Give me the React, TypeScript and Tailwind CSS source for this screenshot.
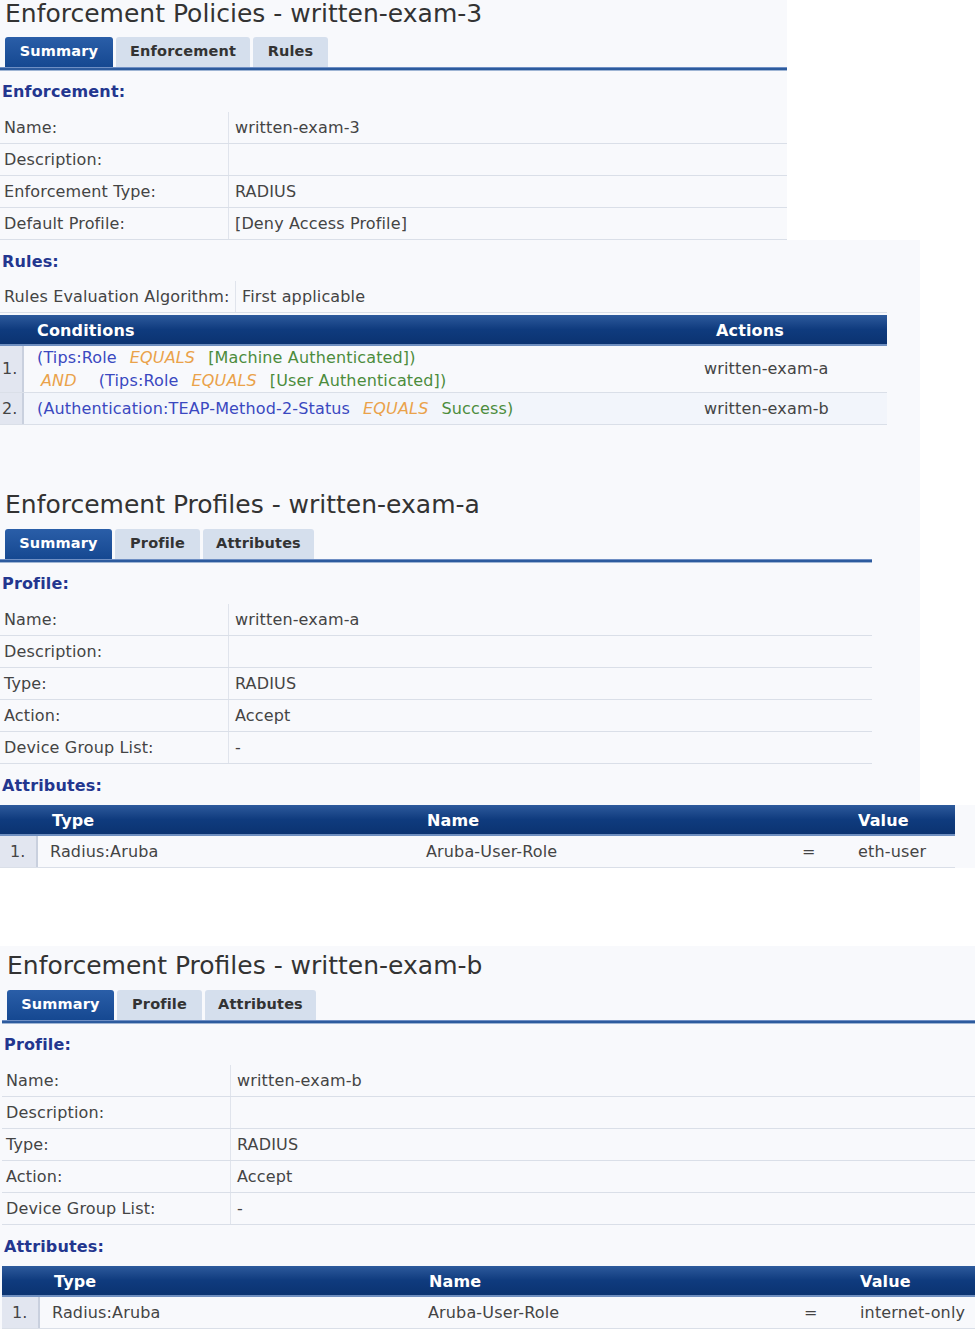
import React from "react";

const font = { fontFamily: '"DejaVu Sans", Verdana, sans-serif', letterSpacing: "0.15px" };

function Title({ text, pl = "pl-[5px]", cls }: { text: string; pl?: string; cls: string }) {
  return (
    <div className={`${cls} ${pl} flex items-center text-[25px] leading-[25px] text-[#333] whitespace-nowrap tracking-normal`}>
      {text}
    </div>
  );
}

function Tabs({ tabs, widths, lineW }: { tabs: string[]; widths: string[]; lineW: string }) {
  return (
    <div className={`${lineW}`}>
      <div className="flex items-end gap-[3px] pl-[5px] h-[30px]">
        {tabs.map((t, i) => (
          <div
            key={t}
            className={`${widths[i]} h-[30px] rounded-t-[3px] flex items-center justify-center text-[14.5px] font-bold ${
              i === 0 ? "bg-linear-to-b from-[#2a5ea8] to-[#154891] text-white" : "bg-[#d5dfed] text-[#333]"
            }`}
          >
            {t}
          </div>
        ))}
      </div>
      <div className="h-[4px] bg-[#2d5b9e] border-t border-[#6f8fc4] border-b border-b-[#9fb5d4]" />
    </div>
  );
}

function Heading({ text, low = false }: { text: string; low?: boolean }) {
  return (
    <div className={`h-[41px] flex items-center pl-[2px] text-[16px] font-bold text-[#23368f] ${low ? "pt-[3px]" : ""}`}>
      {text}
    </div>
  );
}

function Row({ label, value, lw = "w-[229px]" }: { label: string; value: string; lw?: string }) {
  return (
    <div className="flex h-[32px] border-b border-[#dadfe8] text-[16px] text-[#444]">
      <div className={`${lw} shrink-0 pl-[4px] flex items-center border-r border-[#e0e4ec] whitespace-nowrap`}>{label}</div>
      <div className="pl-[6px] flex items-center whitespace-nowrap">{value}</div>
    </div>
  );
}

function TableHeader({ cols }: { cols: { text: string; cls: string }[] }) {
  return (
    <div className="relative h-[31px] bg-linear-to-b from-[#2d5a9c] via-[#0f3b7e] to-[#0b3371] text-white text-[16px] font-bold border-b-[2px] border-[#6f8fc0]">
      {cols.map((c) => (
        <span key={c.text} className={`absolute top-[4px] ${c.cls}`}>
          {c.text}
        </span>
      ))}
    </div>
  );
}

const B = "text-[#3a48c0]";
const O = "text-[#eaa24a] italic";
const G = "text-[#4c8c3c]";

function ProfileSection({
  title,
  name,
  lineW,
  shift,
}: {
  title: string;
  name: string;
  lineW: string;
  shift: boolean;
}) {
  return (
    <>
      <Title text={title} pl={shift ? "pl-[7px]" : "pl-[5px]"} cls="h-[44px] pb-[6px]" />
      <div className={shift ? "pl-[2px]" : ""}>
        <Tabs tabs={["Summary", "Profile", "Attributes"]} widths={["w-[107px]", "w-[85px]", "w-[111px]"]} lineW={lineW} />
      </div>
      <div className={`${lineW} ${shift ? "pl-[2px]" : ""}`}>
        <Heading text="Profile:" />
        <Row label="Name:" value={name} />
        <Row label="Description:" value="" />
        <Row label="Type:" value="RADIUS" />
        <Row label="Action:" value="Accept" />
        <Row label="Device Group List:" value="-" />
      </div>
    </>
  );
}

function AttrTable({ value }: { value: string }) {
  return (
    <div className="text-[16px]">
      <TableHeader
        cols={[
          { text: "Type", cls: "left-[52px]" },
          { text: "Name", cls: "left-[427px]" },
          { text: "Value", cls: "left-[858px]" },
        ]}
      />
      <div className="flex h-[32px] border-b border-[#dadfe8] text-[#444]">
        <div className="w-[38px] shrink-0 bg-[#e2e6f0] border-r-[2px] border-[#c9d0de] flex items-center pl-[10px]">1.</div>
        <div className="w-[388px] shrink-0 pl-[12px] flex items-center">Radius:Aruba</div>
        <div className="w-[376px] shrink-0 flex items-center">Aruba-User-Role</div>
        <div className="w-[56px] shrink-0 flex items-center">=</div>
        <div className="flex items-center">{value}</div>
      </div>
    </div>
  );
}

export default function App() {
  return (
    <div className="bg-white min-h-[1331px] w-[975px] overflow-hidden" style={font}>
      {/* Block A */}
      <div className="w-[787px] bg-[#f8f9fc]">
        <Title text="Enforcement Policies - written-exam-3" cls="h-[37px] pb-[11px]" />
        <Tabs tabs={["Summary", "Enforcement", "Rules"]} widths={["w-[108px]", "w-[134px]", "w-[75px]"]} lineW="w-[787px]" />
        <Heading text="Enforcement:" />
        <Row label="Name:" value="written-exam-3" />
        <Row label="Description:" value="" />
        <Row label="Enforcement Type:" value="RADIUS" />
        <Row label="Default Profile:" value="[Deny Access Profile]" />
      </div>
      {/* Block B */}
      <div className="w-[920px] bg-[#f8f9fc]">
        <div className="w-[887px]">
          <Heading text="Rules:" low />
          <Row label="Rules Evaluation Algorithm:" value="First applicable" lw="w-[236px]" />
          <div className="h-[2px]" />
          <div className="text-[16px]">
            <TableHeader
              cols={[
                { text: "Conditions", cls: "left-[37px]" },
                { text: "Actions", cls: "left-[716px]" },
              ]}
            />
            <div className="flex h-[47px] border-b border-[#dadfe8]">
              <div className="w-[24px] shrink-0 bg-[#e2e6f0] border-r-[2px] border-[#c9d0de] flex items-center pl-[2px] text-[#444]">1.</div>
              <div className="w-[680px] shrink-0 pl-[13px] flex flex-col justify-center leading-[23px] whitespace-nowrap">
                <div>
                  <span className={B}>(Tips:Role</span>
                  <span className={`${O} ml-[13px]`}>EQUALS</span>
                  <span className={`${G} ml-[13px]`}>[Machine Authenticated])</span>
                </div>
                <div>
                  <span className={`${O} ml-[4px]`}>AND</span>
                  <span className={`${B} ml-[22px]`}>(Tips:Role</span>
                  <span className={`${O} ml-[13px]`}>EQUALS</span>
                  <span className={`${G} ml-[13px]`}>[User Authenticated])</span>
                </div>
              </div>
              <div className="flex items-center text-[#444]">written-exam-a</div>
            </div>
            <div className="flex h-[32px] border-b border-[#dadfe8] bg-[#f2f5fb]">
              <div className="w-[24px] shrink-0 bg-[#e2e6f0] border-r-[2px] border-[#c9d0de] flex items-center pl-[2px] text-[#444]">2.</div>
              <div className="w-[680px] shrink-0 pl-[13px] flex items-center whitespace-nowrap">
                <span className={B}>(Authentication:TEAP-Method-2-Status</span>
                <span className={`${O} ml-[13px]`}>EQUALS</span>
                <span className={`${G} ml-[13px]`}>Success)</span>
              </div>
              <div className="flex items-center text-[#444]">written-exam-b</div>
            </div>
          </div>
        </div>
        <div className="h-[60px]" />
        <ProfileSection title="Enforcement Profiles - written-exam-a" name="written-exam-a" lineW="w-[872px]" shift={false} />
        <Heading text="Attributes:" low />
      </div>
      {/* Block C */}
      <div className="bg-[#f8f9fc] w-[975px]">
        <div className="w-[955px]">
          <AttrTable value="eth-user" />
        </div>
        <div className="h-[78px] bg-white" />
      </div>
      {/* Block D */}
      <div className="bg-[#f8f9fc] w-[975px]">
        <ProfileSection title="Enforcement Profiles - written-exam-b" name="written-exam-b" lineW="w-[975px]" shift={true} />
        <div className="pl-[2px]">
          <Heading text="Attributes:" low />
          <AttrTable value="internet-only" />
        </div>
      </div>
    </div>
  );
}
